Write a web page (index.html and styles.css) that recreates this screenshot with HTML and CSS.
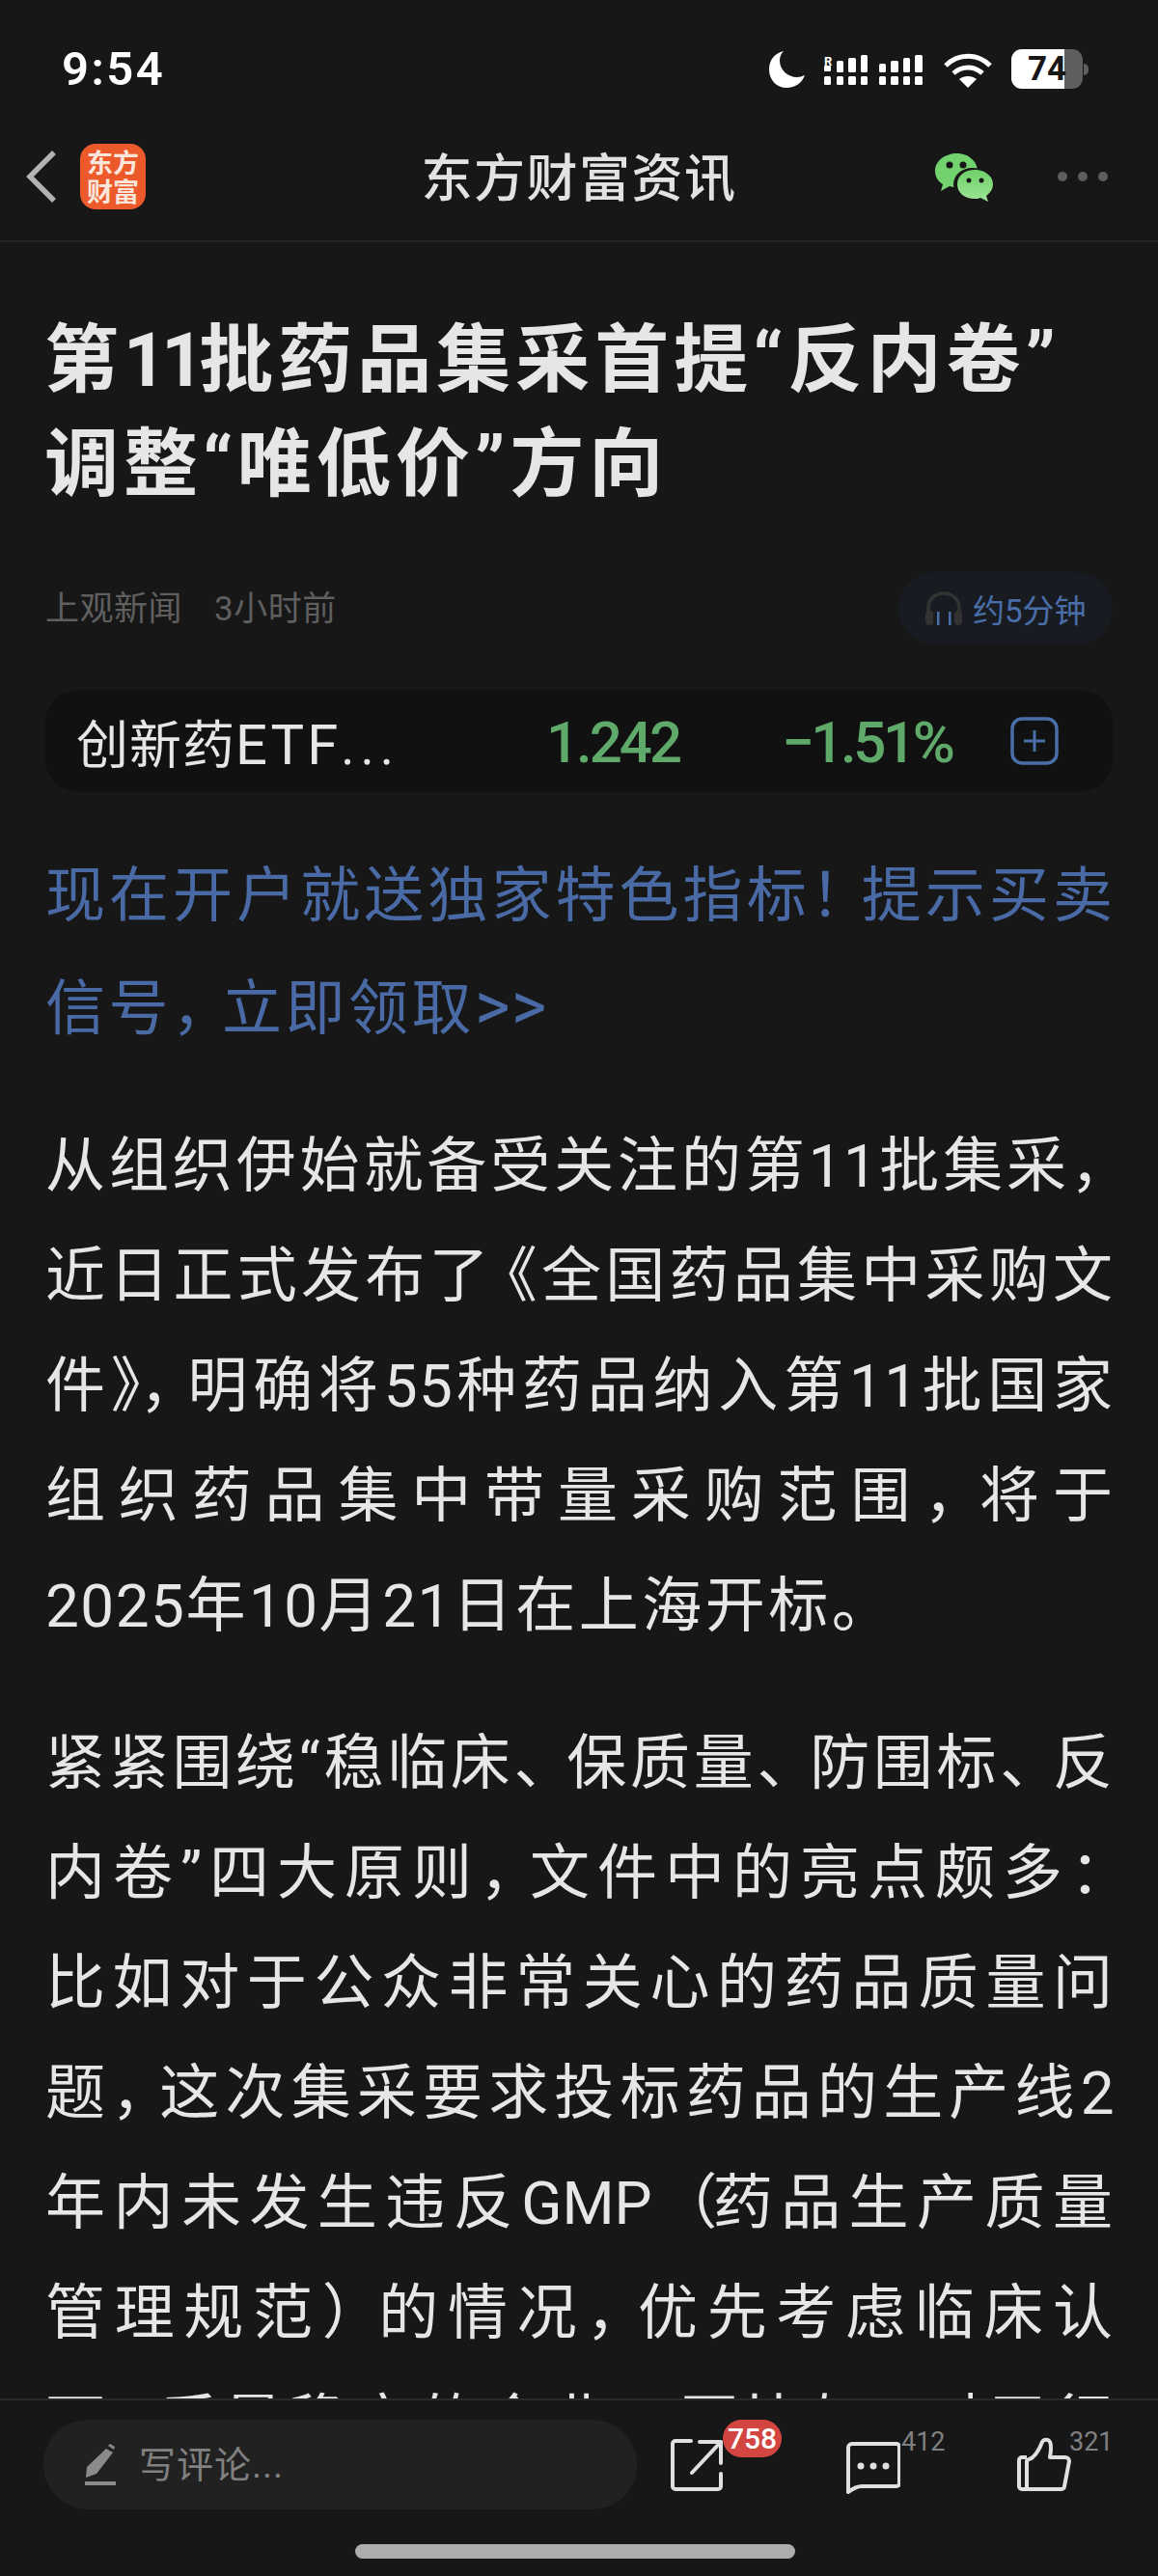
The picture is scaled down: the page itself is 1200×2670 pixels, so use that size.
FILE: index.html
```html
<!DOCTYPE html>
<html lang="zh-CN">
<head>
<meta charset="utf-8">
<title>东方财富资讯</title>
<link rel="stylesheet" href="styles.css">
</head>
<body>
<div class="page">
  <div class="status">
    <div class="time">9:54</div>
    <div class="status-icons">
      <svg class="moon" width="38" height="38" viewBox="0 0 38 38"><path fill="#fff" d="M15 0C6 2 0 9 0 19c0 11 8 19 18 19 9 0 16-5 19-13-3 1-5 2-8 2C19 27 11 19 11 10c0-4 1-7 4-10z"/></svg>
      <svg class="signal" width="102" height="32" viewBox="0 0 102 32">
        <g fill="#fff">
          <text x="0" y="12" font-family="Roboto" font-size="13" font-weight="700">R</text>
          <rect x="0" y="12" width="7" height="6" rx="1"/>
          <rect x="13" y="7" width="7" height="12" rx="1.5"/><rect x="25" y="4" width="8" height="15" rx="1.5"/><rect x="38" y="1" width="7" height="18" rx="1.5"/>
          <rect x="0" y="23" width="7" height="9" rx="1.5"/><rect x="13" y="23" width="7" height="9" rx="1.5"/><rect x="25" y="23" width="8" height="9" rx="1.5"/><rect x="38" y="23" width="7" height="9" rx="1.5"/>
          <rect x="57" y="10" width="7" height="9" rx="1.5"/><rect x="69" y="7" width="8" height="12" rx="1.5"/><rect x="82" y="4" width="7" height="15" rx="1.5"/><rect x="94" y="1" width="8" height="18" rx="1.5"/>
          <rect x="57" y="23" width="7" height="9" rx="1.5"/><rect x="69" y="23" width="8" height="9" rx="1.5"/><rect x="82" y="23" width="7" height="9" rx="1.5"/><rect x="94" y="23" width="8" height="9" rx="1.5"/>
        </g>
      </svg>
      <svg class="wifi" width="50" height="38" viewBox="0 0 50 38">
        <path fill="none" stroke="#fff" stroke-width="5" d="M2 15C15 2 35 2 48 15"/>
        <path fill="none" stroke="#fff" stroke-width="5" d="M10 23c9-8 21-8 30 0"/>
        <path fill="#fff" d="M16 29c5-4 13-4 18 0l-9 9z"/>
      </svg>
      <div class="battery"><div class="battery-fill"></div><span class="battery-num">74</span></div>
      <div class="battery-nub"></div>
    </div>
  </div>

  <div class="nav">
    <svg class="back" width="32" height="56" viewBox="0 0 32 56"><path fill="none" stroke="#b3b3b3" stroke-width="5.5" d="M29 3L4 28l25 25"/></svg>
    <div class="logo"><span>东方</span><span>财富</span></div>
    <div class="nav-title">东方财富资讯</div>
    <svg class="wechat" width="62" height="50" viewBox="0 0 62 50">
      <defs>
        <linearGradient id="wg" x1="0" y1="0" x2="0" y2="1"><stop offset="0" stop-color="#6fd06a"/><stop offset="1" stop-color="#9fe595"/></linearGradient>
      </defs>
      <path fill="#72d26d" d="M23 0C10 0 0 8 0 18c0 6 3 11 8 14l-2 7 9-5c3 1 5 1 8 1 11 0 21-8 21-17S35 0 23 0z"/>
      <path fill="#171717" d="M39 15c-11 0-20 7-20 17s9 17 20 17 20-7 20-17-9-17-20-17z"/>
      <path fill="url(#wg)" d="M41 17c-10 0-18 6-18 15s8 15 18 15c2 0 4 0 6-1l8 4-2-6c4-3 7-7 7-12 0-9-9-15-19-15z"/>
      <circle cx="15" cy="12" r="3.5" fill="#171717"/><circle cx="29" cy="12" r="3.5" fill="#171717"/>
      <circle cx="35" cy="28" r="2.5" fill="#171717"/><circle cx="48" cy="28" r="2.5" fill="#171717"/>
    </svg>
    <div class="more"><i></i><i></i><i></i></div>
  </div>

  <div class="article">
    <h1 class="title">第<span class="title-num">11</span>批药品集采首提“反内卷”<br>调整“唯低价”方向</h1>

    <div class="meta">
      <div class="meta-src"><span>上观新闻</span><span>3小时前</span></div>
      <div class="listen">
        <svg width="40" height="36" viewBox="0 0 40 36">
          <path fill="none" stroke="#333" stroke-width="3.5" d="M4 26V17C4 8 11 2 20 2s16 6 16 15v9"/>
          <rect x="1" y="20" width="8" height="15" rx="4" fill="#333"/><rect x="31" y="20" width="8" height="15" rx="4" fill="#333"/>
          <rect x="13" y="21" width="2.5" height="14" fill="#4a6ea8"/><rect x="25" y="21" width="2.5" height="14" fill="#4a6ea8"/>
        </svg>
        <span>约5分钟</span>
      </div>
    </div>

    <div class="stock">
      <div class="stock-name">创新药<span class="stock-code">ETF</span><span class="stock-dots">...</span></div>
      <div class="stock-price">1.242</div>
      <div class="stock-chg">−1.51%</div>
      <svg class="stock-add" width="50" height="50" viewBox="0 0 50 50"><rect x="2" y="2" width="46" height="46" rx="10" fill="none" stroke="#4a6ea8" stroke-width="3.5"/><path stroke="#4a6ea8" stroke-width="3" d="M25 14v22M14 25h22"/></svg>
    </div>

    <p class="para link">
      <span class="ln">现在开户就送独家特色指标<span class="pb">！</span>提示买卖</span>
      <span class="ln end">信号<span class="pb">，</span>立即领取<span class="arrows">&gt;&gt;</span></span>
    </p>

    <p class="para">
      <span class="ln">从组织伊始就备受关注的第<span class="num">11</span>批集采<span class="pc">，</span></span>
      <span class="ln">近日正式发布了<span class="pq">《</span>全国药品集中采购文</span>
      <span class="ln">件<span class="pe">》</span><span class="pc">，</span>明确将<span class="num">55</span>种药品纳入第<span class="num">11</span>批国家</span>
      <span class="ln">组织药品集中带量采购范围<span class="pc">，</span>将于</span>
      <span class="ln end"><span class="num">2025</span>年<span class="num">10</span>月<span class="num">21</span>日在上海开标。</span>
    </p>

    <p class="para">
      <span class="ln">紧紧围绕“稳临床<span class="pd">、</span>保质量<span class="pd">、</span>防围标<span class="pd">、</span>反</span>
      <span class="ln">内卷”四大原则<span class="pc">，</span>文件中的亮点颇多<span class="pc">：</span></span>
      <span class="ln">比如对于公众非常关心的药品质量问</span>
      <span class="ln">题<span class="pc">，</span>这次集采要求投标药品的生产线<span class="num">2</span></span>
      <span class="ln">年内未发生违反<span class="latin">GMP</span><span class="pb">（</span>药品生产质量</span>
      <span class="ln">管理规范<span class="pb">）</span>的情况<span class="pc">，</span>优先考虑临床认</span>
      <span class="ln">可<span class="pc">，</span>质量稳定的企业。同比如<span class="pc">，</span>对于行</span>
    </p>
  </div>

  <div class="footer">
    <div class="footer-row">
      <div class="input">
        <svg width="32" height="44" viewBox="0 0 32 44"><path fill="#8a8a8a" d="M22 5l7 4-17 22-11 4 1-11zM24 2l2-2 5 3-1 3z"/><rect x="0" y="39" width="32" height="4" fill="#8a8a8a"/></svg>
        <span class="input-text">写评论...</span>
      </div>
      <div class="act act-share">
        <svg width="54" height="54" viewBox="0 0 54 54"><path fill="none" stroke="#e0e0e0" stroke-width="4" stroke-linecap="round" stroke-linejoin="round" d="M21 2H5a3 3 0 0 0-3 3v44a3 3 0 0 0 3 3h44a3 3 0 0 0 3-3V36M22 35L52 3M30 3h22v22"/></svg>
        <span class="badge">758</span>
      </div>
      <div class="act act-comment">
        <svg width="56" height="56" viewBox="0 0 56 56"><path fill="none" stroke="#e0e0e0" stroke-width="4" stroke-linejoin="round" d="M2 52V6a4 4 0 0 1 4-4h46a3 3 0 0 1 3 3v38a3 3 0 0 1-3 3H16c-5 0-10 3-14 6z"/><circle cx="15" cy="25" r="3.5" fill="#e0e0e0"/><circle cx="28" cy="25" r="3.5" fill="#e0e0e0"/><circle cx="41" cy="25" r="3.5" fill="#e0e0e0"/></svg>
        <span class="count">412</span>
      </div>
      <div class="act act-like">
        <svg width="56" height="56" viewBox="0 0 56 56"><path fill="none" stroke="#e0e0e0" stroke-width="4" stroke-linejoin="round" d="M10 21H5a3 3 0 0 0-3 3v27a3 3 0 0 0 3 3h41a3 3 0 0 0 3-3l5-26a4 4 0 0 0-4-4H34c1-6 2-12 0-16-2-3-6-3-8 0-2 5-4 11-10 16-2 2-6 2-6 4v30"/></svg>
        <span class="count">321</span>
      </div>
    </div>
    <div class="home-wrap"><div class="home"></div></div>
  </div>
</div>
</body>
</html>
```

FILE: styles.css
```css
* { box-sizing: border-box; }
html, body { margin: 0; padding: 0; background: #171717; }
body {
  font-family: Roboto, "Noto Sans CJK SC", sans-serif;
  color: #e6e6e6;
  overflow: hidden;
}
.page {
  width: 1200px;
  height: 2670px;
  display: flex;
  flex-direction: column;
  overflow: hidden;
  background: #171717;
}

/* status bar */
.status {
  height: 120px;
  flex: none;
  padding: 51px 72px 0 64px;
  display: flex;
  justify-content: space-between;
  align-items: flex-start;
}
.time { font-size: 49px; font-weight: 600; line-height: 42px; color: #fff; letter-spacing: 2.5px; }
.status-icons { display: flex; align-items: flex-start; }
.moon { margin-top: 2px; }
.signal { margin: 5px 0 0 19px; }
.wifi { margin: 2px 0 0 22px; }
.battery {
  position: relative;
  width: 74px;
  height: 41px;
  margin-left: 20px;
  border-radius: 11px;
  background: #5f5f5f;
  overflow: hidden;
}
.battery-fill { width: 55px; height: 41px; background: #fff; }
.battery-num {
  position: absolute;
  left: 17px;
  top: 0;
  font-size: 35px;
  line-height: 41px;
  font-weight: 700;
  color: #171717;
}
.battery-nub { width: 5px; height: 12px; margin: 15px 0 0 1px; background: #5f5f5f; border-radius: 0 5px 5px 0; }

/* nav */
.nav {
  position: relative;
  height: 131px;
  flex: none;
  display: flex;
  align-items: flex-start;
  padding-left: 27px;
  border-bottom: 2px solid #242424;
}
.back { margin-top: 35px; }
.logo {
  width: 68px;
  height: 68px;
  margin: 29px 0 0 24px;
  border-radius: 16px;
  background: #ec5a2c;
  display: flex;
  flex-direction: column;
  align-items: center;
  justify-content: center;
  font-family: "Noto Sans CJK SC", sans-serif;
  font-weight: 700;
  font-size: 27px;
  line-height: 30px;
  color: #fbe6dc;
}
.logo span { display: block; }
.nav-title {
  position: absolute;
  left: 0;
  right: 0;
  top: 35px;
  text-align: center;
  font-size: 53px;
  line-height: 62px;
  font-weight: 500;
  letter-spacing: 1.5px;
  color: #e2e2e2;
}
.wechat { position: absolute; left: 969px; top: 39px; }
.more { position: absolute; left: 1096px; top: 58px; display: flex; gap: 11px; }
.more i { width: 10px; height: 10px; border-radius: 50%; background: #5e5e5e; }

/* article */
.article {
  flex: 1;
  min-height: 0;
  overflow: hidden;
  padding: 69px 47px 0;
}
.title {
  margin: 0 0 0 -1px;
  font-size: 77px;
  line-height: 108px;
  font-weight: 700;
  letter-spacing: 5px;
  color: #e6e6e6;
  white-space: nowrap;
}
.title-num { letter-spacing: -5px; }
.meta {
  margin-top: 57px;
  height: 75px;
  display: flex;
  align-items: center;
  justify-content: space-between;
}
.meta-src { display: flex; gap: 33px; padding-top: 2px; font-size: 35px; line-height: 50px; letter-spacing: 0.5px; color: #5f5f5f; }
.listen {
  height: 75px;
  width: 222px;
  padding-left: 27px;
  display: flex;
  align-items: center;
  gap: 10px;
  border-radius: 38px;
  background: #181c22;
  font-size: 33px;
  color: #4a6ea8;
}
.stock {
  position: relative;
  margin-top: 47px;
  height: 106px;
  border-radius: 34px;
  background: #111;
  display: flex;
  align-items: center;
  padding: 0 0 0 32px;
}
.stock-name { width: 487px; font-size: 54px; letter-spacing: 1px; color: #e6e6e6; white-space: nowrap; }
.stock-code { font-size: 58px; letter-spacing: 3px; }
.stock-dots { letter-spacing: 6px; }
.stock-price { width: 244px; padding-top: 2px; font-size: 60px; font-weight: 500; color: #5fa96a; letter-spacing: -3px; }
.stock-chg { width: 237px; padding-top: 2px; font-size: 60px; font-weight: 500; color: #5fa96a; letter-spacing: -3.4px; }
.stock-add { flex: none; }

.para {
  margin: 51px -3px 0 0;
  font-size: 62px;
  line-height: 114px;
  letter-spacing: 3px;
  color: #e6e6e6;
  white-space: nowrap;
}
.para + .para { margin-top: 49px; }
.link { color: #4a6aa5; }
.ln { display: block; text-align: justify; text-align-last: justify; }
.ln.end { text-align-last: left; letter-spacing: 3.5px; }
.num { letter-spacing: 1.5px; }
.latin { letter-spacing: 0; }
.pc { letter-spacing: -15px; }
.pd { letter-spacing: -8px; }
.pq { margin-left: -16px; }
.pe { letter-spacing: -4px; }
.pb { letter-spacing: -10px; }
.arrows { letter-spacing: 1px; font-size: 70px; }

/* footer */
.footer {
  flex: none;
  height: 184px;
  border-top: 2px solid #2a2a2a;
  background: #171717;
}
.footer-row {
  position: relative;
  height: 113px;
  padding: 20px 0 0 45px;
  display: flex;
}
.input {
  width: 615px;
  height: 93px;
  border-radius: 47px;
  background: #212121;
  padding-left: 43px;
  display: flex;
  align-items: center;
  gap: 24px;
  font-size: 38px;
  letter-spacing: 1px;
  color: #808080;
}
.input-text { padding-bottom: 6px; }
.act { position: absolute; }
.act svg { display: block; }
.act-share { left: 695px; top: 40px; }
.act-comment { left: 877px; top: 43px; }
.act-like { left: 1054px; top: 38px; }
.badge {
  position: absolute;
  left: 54px;
  top: -20px;
  width: 61px;
  height: 39px;
  border-radius: 20px;
  background: #d24540;
  color: #fff;
  font-size: 30px;
  font-weight: 500;
  line-height: 39px;
  text-align: center;
}
.count {
  position: absolute;
  left: 57px;
  top: -15px;
  font-size: 27px;
  line-height: 30px;
  color: #808080;
}
.act-like .count { left: 54px; top: -10px; }
.home-wrap { padding: 36px 0 0 368px; }
.home { width: 456px; height: 15px; border-radius: 8px; background: #adadad; }
```
